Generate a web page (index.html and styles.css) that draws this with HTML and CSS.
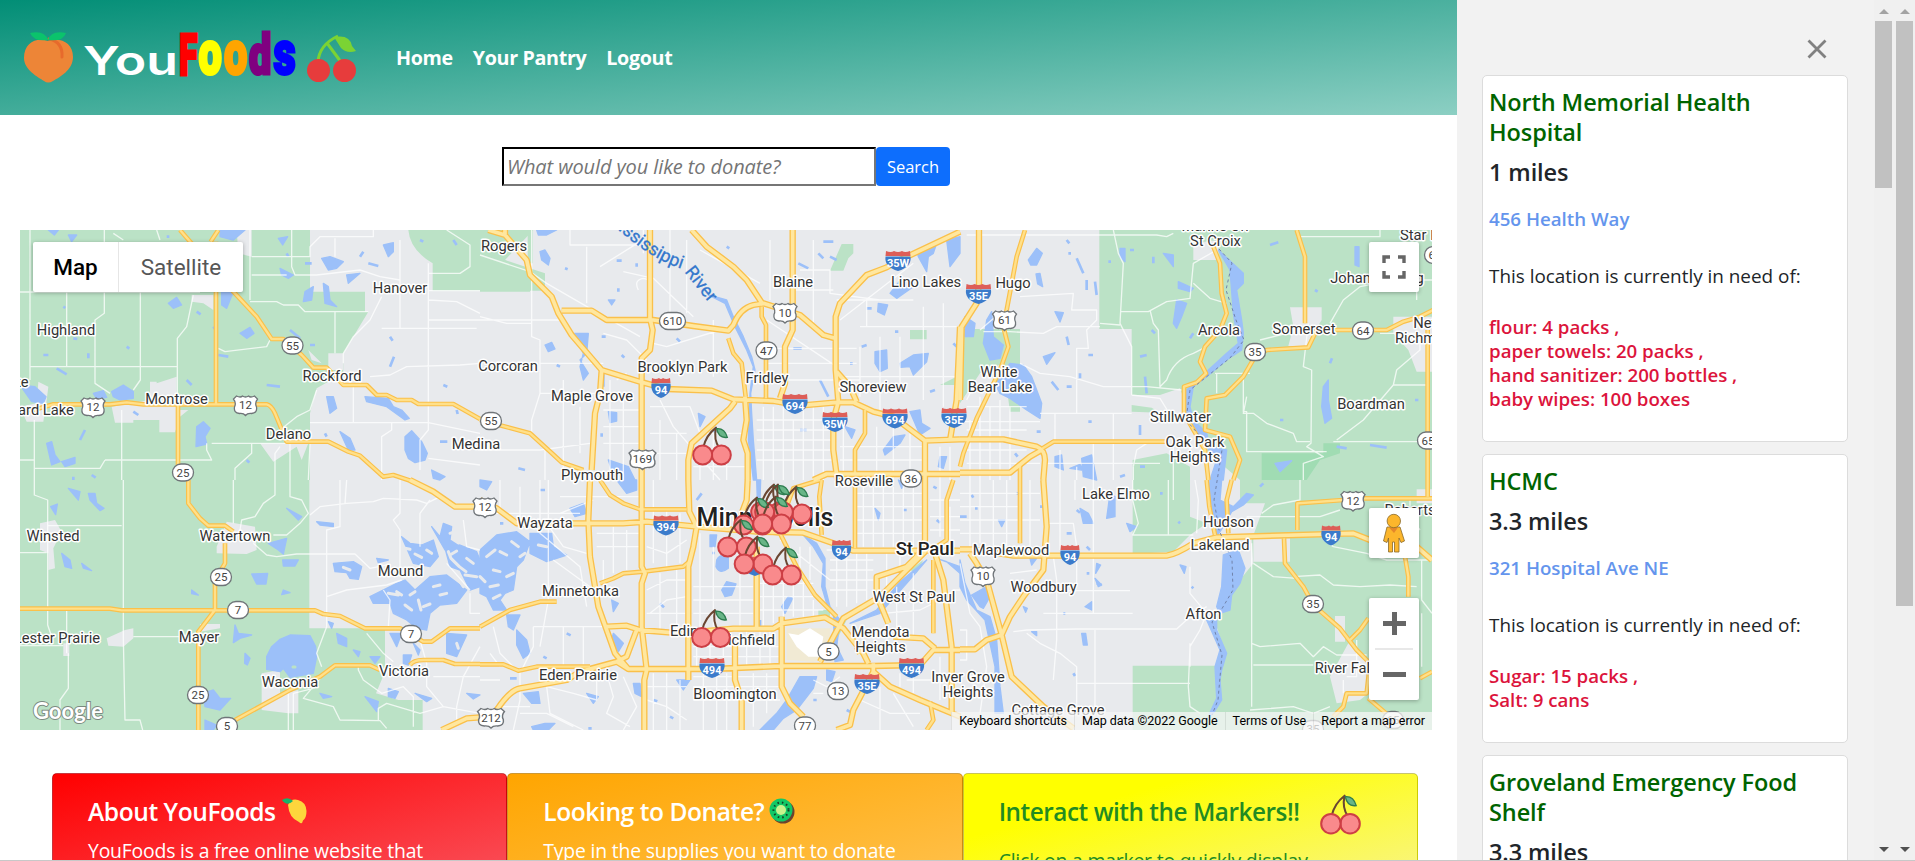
FILE: index.html
```html
<!DOCTYPE html>
<html lang="en">
<head>
<meta charset="utf-8">
<title>YouFoods</title>
<link rel="stylesheet" href="styles.css">
</head>
<body>
<div class="app">
<div class="page">
  <header class="navbar">
    <svg class="logo" width="340" height="60" viewBox="20 28 340 60">
      <path d="M48 41C37 37 24 42 24 58C24 70 38 77 44 81Q48 84 53 81C60 77 73 70 73 57C73 42 60 37 48 41Z" fill="#ed8537"/>
      <path d="M49 39Q63 42 62 57" fill="none" stroke="#e76a2c" stroke-width="3" stroke-linecap="round"/>
      <path d="M48 40Q34 42 30 33Q45 30 48 40ZM48 40Q51 30 66 33Q63 42 48 40Z" fill="#0bc36c"/>
      <g class="logo-you"><text x="83" y="75" textLength="95" lengthAdjust="spacingAndGlyphs">You</text></g>
      <g class="logo-foods">
        <text transform="translate(179 74.500) scale(.58 1)" fill="#f00" stroke="#f00" font-size="58">F</text>
        <text transform="translate(198.500 73.500) scale(.67 1)" fill="#ff0" stroke="#ff0" font-size="62">o</text>
        <text transform="translate(224 73.500) scale(.67 1)" fill="#ffa500" stroke="#ffa500" font-size="62">o</text>
        <text transform="translate(249 74) scale(.72 1)" fill="#800080" stroke="#800080" font-size="55">d</text>
        <text transform="translate(273.500 73.500) scale(.7 1)" fill="#00f" stroke="#00f" font-size="62">s</text>
      </g>
      <path d="M318 62Q319 45 338 36M327 43L341 62" fill="none" stroke="#7bd334" stroke-width="3"/>
      <path d="M334 37Q350 34 352 46L356 51Q347 54 341 48Z" fill="#7bd334"/>
      <ellipse cx="318.500" cy="70.500" rx="11.500" ry="11.500" fill="#e73c3c"/>
      <ellipse cx="344.500" cy="70.500" rx="11.500" ry="11.500" fill="#e73c3c"/>
    </svg>
    <nav class="links"><a>Home</a><a>Your Pantry</a><a>Logout</a></nav>
  </header>

  <form class="search">
    <input type="text" placeholder="What would you like to donate?">
    <button type="button">Search</button>
  </form>

  <section class="map">
    <svg class="map-canvas" width="1412" height="500" viewBox="20 230 1412 500">
      <defs>
        <g id="cherry">
          <path d="M72 5Q42 28 34 64M72 5Q64 40 82 66" fill="none" stroke="#6a4632" stroke-width="6" stroke-linecap="round"/>
          <path d="M74 8Q98 6 106 34Q80 38 74 8Z" fill="#68b587" stroke="#2e7d50" stroke-width="4"/>
          <circle cx="88" cy="87" r="28.500" fill="#f98a8c" stroke="#cd3f45" stroke-width="6"/>
          <circle cx="32" cy="87" r="28.500" fill="#f98a8c" stroke="#cd3f45" stroke-width="6"/>
        </g>
        <rect id="st" x="-10.500" y="-8.500" width="21" height="17" rx="8.500" fill="#fff" stroke="#6f7478" stroke-width="1.300"/>
        <rect id="st3" x="-13" y="-8.500" width="26" height="17" rx="8.500" fill="#fff" stroke="#6f7478" stroke-width="1.300"/>
        <path id="us" d="M-9-9Q-5-7-3-9Q0-7 3-9Q5-7 9-9L12-6Q9-2 11 2Q12 8 6 8.500Q2 8 0 10.500Q-2 8-6 8.500Q-12 8-11 2Q-9-2-12-6Z" fill="#fff" stroke="#6f7478" stroke-width="1.300"/>
        <g id="is"><path d="M-9.500-4.500H9.500Q11 6 0 10Q-11 6-9.500-4.500Z" fill="#3b7bcb"/><path d="M-9-10Q-5-8-2-10Q0-8 2-10Q5-8 9-10L9.500-5H-9.500Z" fill="#dd5e58"/></g>
        <g id="is3"><path d="M-12.500-4.500H12.500Q14 6 0 10Q-14 6-12.500-4.500Z" fill="#3b7bcb"/><path d="M-12-10Q-7-8-4-10Q0-8 4-10Q7-8 12-10L12.500-5H-12.500Z" fill="#dd5e58"/></g>
        <g id="major">
          <path transform="translate(480 220) scale(.33333)" d="M25 30L75 45 140 120 150 165 215 230 235 280 275 345 365 450 480 485 560 507 695 512 760 538 880 543 960 557 1070 547H1120L1180 575 1240 590 1335 662 1440 658M75 30V45M510 30V295L518 330 510 390 485 415V780M245 272H335L380 300H520L640 318 745 332 760 315Q780 265 820 255L850 250 960 285 1030 345 1065 355M635 30L680 80 760 140 800 180 850 255M938 30V330L915 380V490L900 535M1440 35L1260 120 1220 142 1160 165 1080 250 1067 290V450L1075 545 1060 600V690L1072 780M1070 455L1110 500 1130 545M365 450L360 520 345 580 335 750M765 545L750 565 690 620 635 670 625 720V780M795 530L800 600 790 660 803 700V780M1440 320L1430 540 1410 660M1335 662V780M1000 780L1040 762H1440"/>
          <path transform="translate(960 220) scale(.33333)" d="M57 30V190L50 250 5 320 0 540M0 658H130L230 680Q255 690 255 720L250 780M0 758H150L210 710 245 690"/>
          <path transform="translate(0 480) scale(.33333)" d="M1230 0L1300 35 1365 80H1440M1325 750L1400 715 1440 712"/>
          <path transform="translate(480 480) scale(.33333)" d="M330 0L325 120 330 230 355 380 405 520 445 567M485 0V260L495 280 485 310V440L500 570 493 600V750M0 60L50 85 110 130H430L500 125 650 140 830 155 970 158 1060 190 1120 212H1440M625 0L628 95 650 140 640 200 625 260V600M803 0L800 60 770 140M380 440L440 437 480 450 600 460 760 446H880L905 430 1035 412 1090 445 1150 520 1165 550M470 450L440 530 410 545M50 690Q90 630 120 625L260 600 300 575 410 545 445 567H700L900 558H1180L1320 555 1360 510H1440M765 490V600L785 660V750M905 410V620L930 670 970 710M830 200V445M1335 0V180L1310 230 1280 260 1190 290V345L1225 430M1020 545L1050 490 1090 415 1200 350 1290 260 1335 215M1365 220L1390 300 1415 500V700M1240 470L1330 475 1365 505M1180 550V575L1230 620 1320 660 1440 710M1070 750L1110 735 1120 690 1180 575M1140 520L1130 500"/>
          <path transform="translate(960 480) scale(.33333)" d="M0 208H40L160 227H620Q650 222 700 190L770 172 1180 160 1230 180 1370 200 1416 240M250 0L260 140 250 270 190 350 150 410 125 465 80 480 45 508H0M30 220L50 250 80 300 125 465 155 590 250 680 340 745"/>
        </g>
        <g id="minor">
          <path transform="translate(0 220) scale(.33333)" d="M540 30L700 215 770 290 815 357H850L905 405 940 443H980L1030 495H1100L1130 525H1160L1190 540H1235L1255 552H1360L1440 597M655 30L632 65M648 65V553M60 570H100L160 553H330L380 547 430 553H800Q815 557 825 580L860 665H985L1045 695 1080 707 1150 770 1180 765 1240 785M534 553V740L565 780"/>
          <path transform="translate(480 220) scale(.33333)" d="M0 600L65 617 150 640 205 690 245 727 310 750M845 260V290L858 315V535M745 355L760 400 785 430 797 530M1155 570V640L1125 690V760"/>
          <path transform="translate(960 220) scale(.33333)" d="M195 30L170 110 140 270 130 320 145 380 120 450 50 595 10 700 0 740M240 690L280 665H620M180 730V780M760 80L780 130 785 220 800 280 780 330 735 380 720 425 738 460 710 487 672 500V580L735 690 745 780M1010 30L1035 110V310M1430 265L1380 290 1330 305 1280 330H1070L1045 382 920 390 885 410 850 470 795 525 740 535 735 630 810 650 840 720 820 780M1403 330V780"/>
          <path transform="translate(0 480) scale(.33333)" d="M565 0V70L600 115 625 137H675L700 155M675 190V250L645 300V390L595 455V750M60 386H330L365 391H945L970 402 1020 408 1095 445H1200L1270 485H1295L1350 445H1440M680 735L715 715 870 630 960 590 1005 556H1110L1140 570M1230 555Q1240 540 1270 540H1330L1365 552H1440"/>
          <path transform="translate(480 480) scale(.33333)" d="M360 0L390 45 430 70 480 88H620M0 440L90 390 180 365H230M360 310L400 295 430 280 490 275 610 260 628 245M0 553H70L115 572 170 560H330M850 155L900 160 950 260 1005 345 1070 410M1025 0L1018 50 1025 165M1125 0V205M1360 240V460M1350 665L1360 720 1340 750M1420 0L1400 60V180L1370 200M920 80L940 25 1020 0"/>
          <path transform="translate(960 480) scale(.33333)" d="M180 0V190M740 0L748 80 765 165M815 0L800 60 805 160M1012 150V70L1150 60 1200 55H1416M1403 0V50M972 175L975 250 1030 320 1060 375 1140 445 1190 510 1230 550 1220 640H1160L1150 680 1120 710M1170 480L1200 450 1225 415M1335 230L1345 290V350M1225 655L1290 710M1380 595L1416 575"/>
        </g>
      </defs>

      <rect x="20" y="230" width="1412" height="500" fill="#e8eaed"/>

      <!-- parks and farmland -->
      <g fill="#bbe2c6">
        <path transform="translate(0 220) scale(.33333)" d="M60 30H930V215H1095V275H1105L1030 400V460L950 505 930 580V780H60ZM1225 30H1600L1515 120 1635 160V212H1298V130Q1230 90 1225 30Z"/>
        <path transform="translate(480 220) scale(.33333)" d="M0 105L75 120 150 160V215H0ZM143 30H158V130H143ZM1085 72h35v28l-15 15-15 37h-40zM1290 330h50v28h-50zM1380 495l60-30v30z"/>
        <path transform="translate(960 220) scale(.33333)" d="M418 30H1416V780H840L735 690 680 560 660 505 600 525H515V327H418ZM515 555l60 8 25 15-85-3zM518 720L620 700 690 740V780H518ZM0 327H180V575H150L130 430 60 460 0 550Z"/>
        <path transform="translate(0 480) scale(.33333)" d="M60 0H928V445H1155V575L1128 640 1195 660H1268V750H60Z"/>
        <path transform="translate(480 480) scale(.33333)" d="M1015 390h35v20h-35zM1060 430l40-10-30 60zM1290 270l40-30-20 40z"/>
        <path transform="translate(960 480) scale(.33333)" d="M518 0H690V110L740 130 690 165 640 215 518 222ZM840 0H1416V750H518V557H765L790 500 760 410 840 300 880 250 875 180 915 70 840 70Z"/>
      </g>
      <path transform="translate(960 220) scale(.33333)" fill="#a0dcb3" d="M905 700H1090V670H1140V700L1080 720 1040 780H905Z"/>
      <g fill="#e8eaed">
        <path transform="translate(0 220) scale(.33333)" d="M470 490L530 470V570H565L540 590 525 637H478V600H400V608H345L335 560 450 540 450 485H470ZM710 30H755V110L715 100ZM575 225H640V270L610 250 575 245ZM115 485L145 500 140 540 130 605H80L60 560 110 550ZM780 670H925L905 720 890 680 820 725ZM985 400H1030V450H985ZM925 390l40 40-30-10z"/>
        <path transform="translate(0 480) scale(.33333)" d="M120 130L165 120 185 155 160 205 165 265 145 270 145 220 120 210ZM650 200L680 125 765 140 770 210 740 222 650 220ZM320 475L375 450 400 445V475L370 500 325 497ZM600 432H660V445L600 455ZM785 580L840 570V640L895 630V700H865L785 690ZM190 490h18v38h-18z"/>
        <path transform="translate(960 220) scale(.33333)" d="M700 70L775 60V120H700ZM990 262H1085V300L1060 340 1040 378H985L1000 320ZM1300 290H1416V455H1370L1345 390 1300 340Z"/>
        <path transform="translate(960 480) scale(.33333)" d="M880 175H990V245H880ZM1125 408H1155V485H1125ZM1110 590L1165 490 1225 540V640L1200 660 1130 670ZM1370 28H1416V70H1370Z"/>
      </g>
      <path transform="translate(480 480) scale(.33333)" fill="#f1ead4" d="M920 445H1050V530L1000 545 920 540Z"/>
      <path transform="translate(480 480) scale(.33333)" fill="#fff" d="M925 460L955 465 990 445 1030 470 1020 530 985 530 950 500Z"/>

      <!-- lakes and rivers -->
      <g fill="#9cc0f9" stroke="#9cc0f9" stroke-width="4" stroke-linejoin="round">
        <path transform="translate(0 220) scale(.33333)" d="M660 30H735L700 60 660 50ZM60 495L105 500 138 530 130 550 95 545ZM335 515L370 495 400 515 400 535 360 540 340 530ZM280 520l30-8 10 20-30 5zM590 620L610 605 630 625 615 650 620 672 588 680ZM140 670L155 665 165 705 180 725 155 735ZM185 725L225 712 225 730 195 740ZM965 115L990 110 1030 125 1010 145 985 150ZM980 530l20 0 10 35-20 15zM1095 530L1165 535 1180 560 1205 570 1228 595 1215 600 1160 560 1100 545ZM1020 635L1050 655 1065 690 1045 690ZM1215 650L1235 632 1265 665 1282 700 1275 720 1245 728 1225 715 1215 690ZM505 250L530 232 545 255 520 265ZM665 215L700 215 680 265 665 255ZM720 340L750 322 762 340 740 355ZM840 145L880 165 865 175 845 165ZM915 215L940 200 935 240 910 245ZM970 190L985 200 990 240 1010 260 975 250ZM1150 75L1180 68 1180 95 1165 110ZM1040 165l40-5-35 30zM1295 750L1335 770 1320 780 1300 775ZM835 55l28-5-15 25zM145 30h30l-12 15zM205 45l25 0-15 20z"/>
        <path transform="translate(480 220) scale(.33333)" d="M180 95l15-5 15 25-5 20-20-15zM280 340L325 340 320 400 300 420 325 460 310 480 300 440 310 400ZM195 375l20-8 10 20-20 8zM385 575l25 3 0 25-20 5zM385 720l60 20 20 40h-60zM1185 395L1220 390 1222 445 1200 455 1185 430ZM1260 430L1300 405 1345 400 1340 425 1300 465 1290 440 1262 442ZM1310 90L1370 70 1360 100 1345 110 1340 155 1315 110ZM1400 60L1440 50V100L1410 140ZM1230 220L1265 175 1300 200 1250 235ZM1195 250l28 5-10 30-20-10zM1210 690L1240 650 1275 645 1260 670 1215 705ZM1290 575L1320 570 1325 610 1350 625 1320 645ZM1095 620l30 10-10 25zM1380 710l20 0-10 35-15-5zM655 580l20 10-15 30zM385 240l20 0-10 15zM685 225L740 240 760 290 790 350 815 410 825 450 812 520 815 580 820 660 830 780H820L805 660 810 520 820 440 800 390 765 320 735 250ZM170 30H230L200 45 175 45Z"/>
        <path transform="translate(960 220) scale(.33333)" d="M205 120L230 85 247 100 230 135 212 135ZM228 162l12-2 8 40-15-8zM80 300L95 275 100 350 130 375 120 415 90 420 70 370ZM15 290L45 310 40 350 15 350ZM105 490L150 430 190 435 215 470 245 550 240 595 200 570 150 535 120 520ZM285 275l25 3-10 28zM250 410l35-12-25 35zM640 310L650 240 680 250 665 290 650 325ZM655 185L700 205 690 215 655 205ZM1090 500L1105 480 1105 540 1115 595 1095 610 1085 560ZM610 100l30 5 0 35zM480 85l15 0 0 40-15-15zM1185 80l12 0 0 60-12-5zM945 730L995 722 960 755ZM365 715L395 705 410 780 370 770ZM775 90L850 160 850 190 830 210 845 300 850 340 845 390 800 420 740 470 700 500 690 560 700 600 740 640 750 680 800 690 790 780 750 780 770 720 710 640 675 590 680 510 800 400 835 370 820 280 810 150ZM285 710L305 705 310 750 285 740ZM330 745l30-12 10 18z"/>
        <path transform="translate(0 480) scale(.33333)" d="M800 530L815 500 840 478 870 465 930 467 947 500 950 530 940 580 870 592 850 565 840 575 800 568ZM205 25L240 35 235 60ZM265 40L285 40 290 70 312 85 300 92 270 60ZM152 80l20-8-5 32zM185 220L210 240 215 265 195 260ZM245 250l30 22-25-8zM860 85L905 110 895 120ZM805 190L860 175 850 222 835 210ZM848 240L895 240 885 258 850 258ZM755 282L803 280 798 312 770 312ZM575 330l20 15-20-4zM850 330l20 8-25 6zM705 435L715 460 755 465 720 475 700 488ZM735 520l15 15-8 20-8-5zM610 640L640 630 660 655 692 655 660 690 615 680ZM615 720L650 735 640 750H615ZM950 125L1000 130 1000 140 960 135ZM1000 250L1060 245 1085 260 1075 298 1050 295 1040 278 1005 275ZM1130 235l35 5-30 8zM1205 170L1230 190 1265 195 1300 180 1315 230 1290 260 1240 250ZM1295 140L1320 170 1330 130 1355 140 1350 180 1380 200 1335 210ZM1335 205L1380 195 1430 215 1440 240V320L1410 330 1380 270 1350 260ZM1110 350L1190 310 1215 300 1245 330 1290 290 1340 285 1400 330 1370 370 1320 375 1290 400 1280 450 1250 445 1220 420 1180 400 1170 370 1120 370ZM1010 460L1040 475 1040 500 1015 490ZM1060 510l20 5-5 15zM1110 530l30 0-15 20zM1340 460L1400 465 1370 530 1340 520ZM1095 650L1135 665 1130 695ZM1165 625l30 10-10 20-20-5zM1245 640L1295 655 1280 665ZM1400 640l40 5-20 12zM960 640l35 10-25 5zM985 425l15 5-5 15zM1210 525l25 0-10 30-15-5zM1170 460l35 0-15 40zM1240 490l20 20-5 15z"/>
        <path transform="translate(480 480) scale(.33333)" d="M0 210L50 165 110 155 150 185 130 240 110 260 100 330 75 340 60 360 80 390 40 390 20 350 0 340ZM150 160L215 160 220 200 260 225 200 245 150 220ZM410 0H470V30L440 40ZM270 85L310 70 320 100 285 110ZM80 405L120 405 100 450 85 440ZM110 450L140 480 150 520 130 535 110 495ZM400 460L430 490 415 515 395 480ZM395 360l20 10-15 25zM130 640L175 635 180 670 155 670ZM320 640l35 10-15 20zM460 610l20 0 5 40-20-10zM710 240Q720 220 745 230L745 265Q720 285 708 260ZM725 330L740 305 768 312 755 345 735 350ZM690 165l20 0-5 35-15 0zM905 380L925 350 938 355 915 400ZM590 600L630 600 610 630ZM920 660L960 590 1010 590 1000 625 950 690 910 715 880 750H840L890 700ZM1040 570l25 5-10 30-15-5zM970 165L1010 190 1035 235 1035 320 1050 380 1080 420 1070 500 1090 540 1065 545 1060 400 1040 370 1025 320 1030 250 1000 200ZM1340 240L1280 310 1200 400 1110 430 1190 390 1260 305ZM1370 235L1440 260V280L1400 245ZM0 0L35 5 20 30 0 20ZM155 740l40-10 30 0-20 20h-45zM1185 85l15 15-5 20zM1255 0l20 10-10 15zM830 0h12l-2 60h-8z"/>
        <path transform="translate(960 480) scale(.33333)" d="M35 345L80 320 90 350 70 385 60 380ZM0 240L15 310 50 390 90 410 110 480 120 620 130 700 105 700 105 560 75 420 20 360 0 320ZM750 0H785L780 60 820 80 860 40 880 45 850 75 815 95 790 140 770 170 745 80ZM790 225L835 210 855 265 840 310 815 345 810 390 780 400 770 380 785 320ZM740 420L770 410 770 450 800 520 785 570 780 600 785 660 760 700 740 720 770 655 765 560 780 510ZM360 85L385 100 400 130 370 130ZM450 40L465 50 465 110 440 115ZM500 130l30 10-20 15zM115 120l20 0-10 20zM410 250l12 5-15 25zM660 255l18 5-5 20zM405 295l20 20-10 5zM375 380L395 365 395 390ZM365 460l12 0 5 35-12 0zM210 235l20 0-15 20zM215 455l15 0 0 12zM190 380l12 5-5 12z"/>
      </g>
      <!-- peninsulas and islands -->
      <g fill="none" stroke="#e8eaed" stroke-width="9" stroke-linecap="round" stroke-linejoin="round">
        <path transform="translate(0 480) scale(.33333)" d="M1245 222l20 10M1215 205l15 3M1350 225l20-12M1345 215l8 20 25 25 20 15M1400 235l20 15M1395 285l35 5M1190 335l15 10M1165 340l30 5M1230 345l15-10M1270 380l20-8M1255 360l8 30M1215 375l20 15M1300 320l20-5M1320 345l20-5M1370 490l5 15M1380 305l10 15M1350 160l15-5M1030 262l20 8M1280 210l15 10"/>
        <path transform="translate(480 480) scale(.33333)" d="M20 230l25-20M60 215l20 10M95 185l20 15M40 270l20 5M30 320l25-5M80 290l20-10M0 290l15 15M175 195l25 5M60 345l-20 10M120 230l15-10"/>
      </g>
      <path d="M293 667h2" stroke="#bbe2c6" stroke-width="3" stroke-linecap="round"/>
      <g fill="none" stroke="#9cc0f9" stroke-width="8">
        <path transform="translate(0 220) scale(.33333)" d="M220 355l12 2M130 405l15 0M170 445l30 18M265 400v15M560 480l15 15M400 575l15 10M240 660l15-30M590 275l12 8M655 405l30 5M800 495l40 5M930 375h15M1170 350l8 12M1170 440l12-30M1080 110l10-15M1330 495l12 5M1105 130l30 8M1260 60l10 5M1360 60l10 15M870 330l30 25M975 640l5 10M1320 665h22M220 770v10M275 765l12 8M500 50h8M915 130h20M860 100l5 10M1370 570l3 12M190 260l6 4M380 380l8 6M640 320l6 8M740 720l8 8"/>
        <path transform="translate(480 220) scale(.33333)" d="M410 122h15M470 130v10M415 205v10M365 350h12M255 145l8 3M115 745l20 5M365 640v10M230 435l10 5M425 405l8 8M590 355l10 10M1160 265h15M1160 375l-15 5M1245 335h10M1020 480l25 50M1110 430h8M1030 65h30M955 130l30 15M1015 100l15 15M470 715l15-10M960 630h20M1050 110l20 10M1350 515l15-5M1420 370l10 10M740 80l8 5M700 630l8 8M940 385h25M370 460v40"/>
        <path transform="translate(960 220) scale(.33333)" d="M325 100h8M350 115l20 45M380 180v30M405 185l5 40M320 350l6 25M385 405h14M275 485l20 25M360 460v15M575 330l10 10M540 410l20-5M555 470l5 50M700 340l-10 15M320 60l8 10M510 90h12M580 110v20M930 75l25-8M1110 430l6-15M960 600h10M1065 210l8 5M540 615v30M480 770l15-5M540 740h15M165 700l8 10M230 635h12M1130 680l30 5M1230 675l50 8M385 605h10M320 500h15M1365 540h10M445 125h8"/>
        <path transform="translate(480 480) scale(.33333)" d="M60 130h10M180 30h15M540 370l12 12M380 600h10M90 595h20M570 710l10 5M325 745h10M190 530l10 5M650 60l15-20M700 215v8M840 420v20M1370 120l10 8M1270 90h10M1000 660h10M1100 690l20 10M1360 20l10 5M520 660l12 4M260 460l12 6"/>
        <path transform="translate(960 480) scale(.33333)" d="M0 110h20M35 45l5 8M45 85h8M170 40h10M350 90l10 8M380 200l10 10M310 400h6M410 310l15 5M380 280h8M695 320l5 5M340 580l5 8M600 40h8M655 125l5 5M900 20l10-10M320 160h15M240 80h20"/>
      </g>

      <!-- local roads -->
      <g fill="none" stroke="#fff" stroke-width="4" stroke-opacity=".75" stroke-linejoin="round">
        <path transform="translate(0 220) scale(.33333)" d="M90 30V480M60 216H600M90 440H530M200 216V440M313 30V280L285 300V490L330 520M421 216V480L400 510M580 225L560 320 532 355V553M365 570V780M750 30V240M750 245H830L850 255H895L915 275H1105M755 110H930V80L960 50H1120V30M755 165H860M875 30V140L885 165H950L1080 150 1140 170 1200 180M1005 55V110M1005 275V400M1030 430V400L1060 350 1110 300 1145 230M950 510L930 570 890 590 840 630M1145 325H1430M1200 60V325M1285 130V240L1370 245 1440 280M1285 240V630L1260 660V750M1285 300H1440M1110 470L1170 465 1220 440 1380 435 1440 430M1060 500V608M930 608H1285L1440 640M1285 160H1380L1410 140V75L1340 30M1285 212H1440M655 385L675 395 800 380 810 360M755 670V700L705 745V780M870 670V780M930 670L925 780M635 670H860M315 720H635L620 690V670M60 720H103V780M103 745H300L315 720M103 600V780M1175 610V630L1145 650V780M1285 715L1440 735M470 30L480 60M840 680L825 700V780M370 60L340 40"/>
        <path transform="translate(480 220) scale(.33333)" d="M155 30V350L180 360V520L155 600V640M0 300H245M0 290L80 310H155M270 30V75H480M320 80V250M0 105L150 155 200 190 330 265 480 350M490 30V100M360 140L480 65M430 155L520 175 640 290M475 210Q460 180 490 175L510 180M570 30V300M620 60V280M660 90L840 190M700 300V470M720 330L560 380 520 370M860 300L1070 440M870 60V240M1000 60V330M1080 300L1300 130M1140 320H1440M1140 380V530M1070 240H1300M940 210H1060M960 150H1050V220L1200 240M1160 240V320M860 385H1130M860 430H1130M880 480H1140M1200 350V570M1260 350V520M1330 260V540M1390 250V560M1080 470H1440M370 340L440 360 500 420M180 430H370M180 520H360M250 480V780M300 560V700M195 690V780M0 690H180L330 670M390 480V780M430 520V780M370 570H490M370 620H490M370 670H490M410 480L440 460M510 560H630L660 640M540 540L580 620 720 780M660 640H800M540 600V780M590 640V780M510 640H620M510 700H620M660 700V780M700 640V780M740 700V780M640 740H800M850 560V780M880 560V780M910 560V780M940 600V780M970 560V780M1000 560V780M1030 560V780M830 600H1060M830 630H1060M830 660H1060M830 690H1060M830 720H1060M1090 600V780M1190 620V780M1240 620V780M1290 640V780M1080 680H1330M1080 720H1330M1380 680V780M1410 680V780"/>
        <path transform="translate(960 220) scale(.33333)" d="M20 45H590L620 50 640 40M460 30L475 100 490 130 480 310 515 380V525M480 275H565L620 245 690 235 700 130 770 90M700 190L750 235 800 250M570 270L580 310 595 330 600 500 620 480Q640 420 700 400L740 380M180 230L340 220 335 270H410V300L380 330 385 385H350V580M70 335H150L250 340 290 320H420M180 430L240 460 330 470 430 500H560L665 510M240 580H515M460 580V780M285 580V660M420 310L480 315M850 460V575H860V695H1100M860 530L850 580L880 580 920 610 1000 640 1010 665 1050 665M515 525L600 535 640 600M765 460H870M770 460V520M1045 310L1030 440 1055 450 1053 670 1040 680 1090 710 1030 730V780M1370 240V180L1250 190 1200 200 1150 240 1110 310M1010 50H1260V30M1370 180H1416M1260 340H1380V390L1310 450 1300 495 1210 600 1130 660M1300 495H1403M1120 665H1416M900 360L980 340M0 605H240M60 330L130 270M20 560H200M30 600V780M60 530V780M90 560V780M120 540V780M150 560V780M20 630H200M20 690H200M20 730H240M40 500L20 540M250 730H600M300 690V780M520 740L530 690 560 670M520 780V740M350 740V780M400 660V780M640 680V780M690 670V700"/>
        <path transform="translate(0 480) scale(.33333)" d="M103 0V45L143 60V435L155 470M143 137H365M60 218H140M370 0V475L375 720H420L428 750M200 390V520M205 520V625L180 660V750M60 497H190M400 470H560M700 0V130M825 0V45L790 70 765 110 725 120 720 150M870 0V50L905 60 925 100 900 130 860 165H820M760 190L800 225 830 230 890 222H1065L1110 265 1160 255M930 105L960 80 1040 70 1120 65 1150 55 1250 60 1280 70 1320 50M1020 0V140L980 150V350L1040 330 1160 315 1205 300M1200 0V100L1180 120 1200 150V280M1260 200V100L1290 60M1150 330L1170 360 1165 440M980 350V440L950 520 965 560M1100 460L1150 520 1180 545M1075 560V570L1090 600 1145 640 1210 620 1240 650V740M965 590L910 655 1000 680 1020 720 1140 722 1160 745M1135 720V685L1160 670 1260 700 1330 680 1440 700M1260 480L1280 550V620L1330 680M1370 720V680L1390 590 1440 500M1300 590H1440M1410 340V400H1440M1340 250L1410 330M865 640V750M880 750V640L940 625M1390 120L1400 200 1440 210M1040 0L1035 70"/>
        <path transform="translate(480 480) scale(.33333)" d="M0 100H300M60 0V90M120 20V110M180 0V160L300 260 320 380M205 0V360L180 500M220 240L330 320M160 440H370M160 440V500L120 580V660L100 750M120 580L60 520 40 440M250 440V560M310 440V560M200 130L250 200 320 220M240 50H480M350 160H480M350 200H480M370 240V300M400 140V280M440 150V270M520 0V250M560 90V260M600 100V250M500 200L560 220 620 180M500 330L560 300 620 300M510 400L560 360 620 350M540 280V450M590 270V450M500 400H620M660 160V440M700 200V440M780 260V440M640 360H820M640 320H820M640 400H820M850 260V440M880 260V430M910 260V410M940 280V410M970 300V410M1000 360V410M840 280H960M840 310H1000M840 350H1010M840 390H1030M900 180L1050 300M960 200V270M990 200V300M1040 210H1180M1050 240H1180M1050 270H1180M1050 300H1180M1050 330H1160M1070 220V380M1100 220V380M1130 220V370M1160 220V360M1150 20V200M1180 20V200M1210 0V200M1240 20V200M1270 0V200M1300 0V200M1130 40H1330M1130 80H1330M1130 120H1330M1130 160H1330M1220 220V330M1260 230V270M1380 0V170M1410 80V210M1350 60H1440M1350 110H1440M1350 150H1440M1210 400L1320 390 1400 350M1250 320V460M1300 280V470M1420 330H1440M650 470V560M690 470V560M730 470V560M800 450V560M840 450V560M870 450V560M640 500H900M640 530H900M640 590H900M640 620H900M640 660H900M670 580V750M710 580V750M740 580V750M820 580V740M860 580V700M520 580V750M560 580V750M600 600V750M500 620H620M500 660L560 680 620 720M430 590L470 680 430 750M350 600V660L280 640 200 620 210 700 310 750M380 580L400 650 380 700 450 740M0 600H60M120 700L200 700 280 740M60 680H150M30 520L60 560M1200 620V750M1240 640L1300 740M1140 660L1230 700 1320 700M1260 580V620M1300 570V640M1380 530V660M1280 600H1440M1000 600L1040 620 1080 590M1000 640H1030M340 60L240 100"/>
        <path transform="translate(960 480) scale(.33333)" d="M0 40H240M0 80H180M0 120H240M0 160H180M30 0V200M60 0V190M100 0V200M140 0V200M210 0V220M260 130H340L350 200V320M300 0V210M345 0V60M400 0V400H250M0 250L30 400 60 440 80 560 60 700M160 455L200 450 350 447H650L690 410 740 380M200 460L240 490 300 520 350 560V700M290 390V480L280 600M290 400V300L280 230M240 332H510M150 280L230 270M400 400H518M518 0V60L535 130 518 165H700M625 0V165M405 450V700M350 610H690M690 260V340L740 400 720 450 690 500 685 620 690 680 720 700M705 0L715 60 710 160M0 450H20V540H0M875 190V680M880 555H1060M875 490L900 500 1020 490 1060 530 1090 500 1130 525H1220M880 250L940 290 1010 295M1000 290L1080 285 1120 315 1200 320 1290 315 1370 320M860 110H1080L1140 90M905 100L940 75 1020 60V0M1090 180L1120 200 1220 220 1280 240H1416M1385 240V360L1416 400M1385 400V560M870 690L1000 680 1060 700 1110 680M1150 600V640M1190 480V590L1160 590M690 490V560M1350 60V110L1380 150M640 0V60"/>
      </g>

      <g fill="none" stroke-linejoin="round">
        <use href="#minor" stroke="#fac04a" stroke-width="14"/>
        <use href="#major" stroke="#fac04a" stroke-width="19"/>
        <use href="#minor" stroke="#ffe08a" stroke-width="7"/>
        <use href="#major" stroke="#ffe79f" stroke-width="11"/>
      </g>
      <path d="M1219 249L1232 263 1226 290 1236 320 1244 340 1230 358 1190 390 1186 420 1200 436 1222 450 1214 500 1219 530 1232 560 1233 590 1220 612 1212 622 1222 655 1218 700 1212 715" fill="none" stroke="#7183ab" stroke-width="1" stroke-dasharray="3 3"/>

      <g class="shield">
        <g transform="translate(292.500 345.500)"><use href="#st"/><text>55</text></g><g transform="translate(183 472.500)"><use href="#st"/><text>25</text></g>
        <g transform="translate(672.500 321)"><use href="#st3"/><text>610</text></g><g transform="translate(766.500 350.500)"><use href="#st"/><text>47</text></g>
        <g transform="translate(491 421)"><use href="#st"/><text>55</text></g><g transform="translate(911 478.500)"><use href="#st"/><text>36</text></g>
        <g transform="translate(1255 352)"><use href="#st"/><text>35</text></g><g transform="translate(1363 330.500)"><use href="#st"/><text>64</text></g>
        <g transform="translate(1428 440.500)"><use href="#st"/><text>65</text></g><g transform="translate(1435 255)"><use href="#st"/><text>65</text></g>
        <g transform="translate(221 577)"><use href="#st"/><text>25</text></g><g transform="translate(238 610)"><use href="#st"/><text>7</text></g>
        <g transform="translate(411 634)"><use href="#st"/><text>7</text></g><g transform="translate(198 695)"><use href="#st"/><text>25</text></g>
        <g transform="translate(227 726)"><use href="#st"/><text>5</text></g><g transform="translate(828.500 651.500)"><use href="#st"/><text>5</text></g>
        <g transform="translate(838 691)"><use href="#st"/><text>13</text></g><g transform="translate(805 725.500)"><use href="#st"/><text>77</text></g>
        <g transform="translate(1313 604)"><use href="#st"/><text>35</text></g><g transform="translate(1393 720)"><use href="#st"/><text>65</text></g>
        <g transform="translate(1313 729)"><use href="#st"/><text>35</text></g>
        <g transform="translate(93 407)"><use href="#us"/><text>12</text></g><g transform="translate(245.500 405)"><use href="#us"/><text>12</text></g>
        <g transform="translate(785 312.500)"><use href="#us"/><text>10</text></g><g transform="translate(642.500 459)"><use href="#us" transform="scale(1.120 1)"/><text>169</text></g>
        <g transform="translate(1004.500 320)"><use href="#us"/><text>61</text></g><g transform="translate(485 507)"><use href="#us"/><text>12</text></g>
        <g transform="translate(491 717.500)"><use href="#us" transform="scale(1.120 1)"/><text>212</text></g><g transform="translate(1353 500.500)"><use href="#us"/><text>12</text></g>
        <g transform="translate(983 576)"><use href="#us"/><text>10</text></g>
      </g>
      <g class="interstate">
        <g transform="translate(661 388)"><use href="#is"/><text>94</text></g><g transform="translate(795 404)"><use href="#is3"/><text>694</text></g>
        <g transform="translate(898 261)"><use href="#is3"/><text>35W</text></g><g transform="translate(835 422)"><use href="#is3"/><text>35W</text></g>
        <g transform="translate(895 418.500)"><use href="#is3"/><text>694</text></g><g transform="translate(954 418)"><use href="#is3"/><text>35E</text></g>
        <g transform="translate(978.500 294)"><use href="#is3"/><text>35E</text></g><g transform="translate(666 525.500)"><use href="#is3"/><text>394</text></g>
        <g transform="translate(841.500 550)"><use href="#is"/><text>94</text></g><g transform="translate(712 668)"><use href="#is3"/><text>494</text></g>
        <g transform="translate(911.500 668)"><use href="#is3"/><text>494</text></g><g transform="translate(867 684)"><use href="#is3"/><text>35E</text></g>
        <g transform="translate(1070 555)"><use href="#is"/><text>94</text></g><g transform="translate(1331 535.500)"><use href="#is"/><text>94</text></g>
        <g transform="translate(755 566)"><use href="#is3"/></g>
      </g>

      <path id="river" d="M568 188L628 238Q655 260 682 269L709 303" fill="none"/>
      <text class="river"><textPath href="#river" startOffset="100%" text-anchor="end">Mississippi River</textPath></text>

      <g class="place">
        <text x="400" y="293">Hanover</text><text x="66" y="335">Highland</text><text x="332" y="381">Rockford</text><text x="176.500" y="404">Montrose</text>
        <text x="31" y="415">Howard Lake</text><text x="13" y="387">Lake</text><text x="288.500" y="439">Delano</text>
        <text x="504" y="251">Rogers</text><text x="793" y="286.500">Blaine</text><text x="926" y="287">Lino Lakes</text><text x="508" y="371">Corcoran</text>
        <text x="682.500" y="372">Brooklyn Park</text><text x="767" y="383">Fridley</text><text x="592" y="400.500">Maple Grove</text><text x="873" y="391.500">Shoreview</text>
        <text x="476" y="448.500">Medina</text><text x="592" y="480">Plymouth</text><text x="864" y="486">Roseville</text>
        <text x="1215" y="231">Marine On</text><text x="1215.500" y="245.500">St Croix</text><text x="1013" y="288">Hugo</text><text x="1219" y="335">Arcola</text><text x="1304" y="333.500">Somerset</text>
        <text x="1436" y="240">Star Prairie</text><text x="1377" y="282.500">Johannesburg</text><text x="1428" y="328">New</text><text x="1428" y="343">Richmond</text>
        <text x="999" y="377">White</text><text x="1000" y="392">Bear Lake</text><text x="1180.500" y="422">Stillwater</text><text x="1195" y="446.500">Oak Park</text><text x="1195" y="461.500">Heights</text><text x="1371" y="409">Boardman</text>
        <text x="53" y="540.500">Winsted</text><text x="235" y="541">Watertown</text><text x="400.500" y="576">Mound</text><text x="57" y="642.500">Lester Prairie</text><text x="199" y="642">Mayer</text><text x="290" y="686.500">Waconia</text><text x="404" y="676">Victoria</text>
        <text x="545" y="528">Wayzata</text><text x="580.500" y="596">Minnetonka</text><text x="914" y="602">West St Paul</text><text x="688" y="636">Edina</text><text x="747" y="644.500">Richfield</text><text x="880.500" y="636.500">Mendota</text><text x="880.500" y="651.500">Heights</text>
        <text x="578" y="680">Eden Prairie</text><text x="735" y="698.500">Bloomington</text><text x="968" y="681.500">Inver Grove</text><text x="968" y="696.500">Heights</text>
        <text x="1116" y="499">Lake Elmo</text><text x="1228.500" y="526.500">Hudson</text><text x="1220" y="549.500">Lakeland</text><text x="1011" y="554.500">Maplewood</text><text x="1043.500" y="592">Woodbury</text><text x="1203.500" y="619">Afton</text>
        <text x="1348" y="672.500">River Falls</text><text x="1410" y="515">Roberts</text><text x="1058" y="715">Cottage Grove</text>
        <text x="925" y="555" class="city">St Paul</text><text x="765" y="525.500" class="metro">Minneapolis</text>
      </g>

      <g>
        <use href="#cherry" transform="translate(692 426) scale(.33333)"/><use href="#cherry" transform="translate(750 483) scale(.33333)"/>
        <use href="#cherry" transform="translate(772.500 485) scale(.33333)"/><use href="#cherry" transform="translate(754 483) scale(.33333)"/>
        <use href="#cherry" transform="translate(733 496) scale(.33333)"/><use href="#cherry" transform="translate(752 495) scale(.33333)"/>
        <use href="#cherry" transform="translate(717 518) scale(.33333)"/><use href="#cherry" transform="translate(733.500 535) scale(.33333)"/>
        <use href="#cherry" transform="translate(762 546) scale(.33333)"/><use href="#cherry" transform="translate(691 608.500) scale(.33333)"/>
      </g>
      <text class="google" x="33" y="719" textLength="70" lengthAdjust="spacingAndGlyphs">Google</text>
    </svg>

    <div class="map-ui">
      <div class="maptype"><span class="on">Map</span><span>Satellite</span></div>
      <div class="tools">
        <div class="tool"><svg width="24" height="24" viewBox="0 0 24 24"><path d="M2 8V2H8M16 2H22V8M22 16V22H16M8 22H2V16" fill="none" stroke="#666" stroke-width="3.400"/></svg></div>
        <div class="tool pegman"><svg width="24" height="40" viewBox="0 0 24 40"><path d="M5 14H18L22.500 28 19 29.500 17 25V39H12.500V29H10.500V39H6.500V25L5 29.500 1.500 28Z" fill="#fcb62c" stroke="#8a6a28" stroke-width=".8"/><path d="M7 14.500H16L12 20Z" fill="#e5872a"/><circle cx="11.800" cy="8" r="6.700" fill="#fcb62c" stroke="#8a6a28" stroke-width=".8"/></svg></div>
        <div class="zoom"><svg width="50" height="102" viewBox="0 0 50 102"><path d="M14 25.500H37M25.500 14V37M14 76.500H37" stroke="#666" stroke-width="5"/><path d="M6 51H44" stroke="#e0e0e0" stroke-width="1.500"/></svg></div>
      </div>
      <div class="legal"><span>Keyboard shortcuts</span><span>Map data ©2022 Google</span><span>Terms of Use</span><span>Report a map error</span></div>
    </div>
  </section>

  <section class="cards">
    <article class="card red">
      <h2>About YouFoods <svg width="28" height="28" viewBox="0 0 28 28"><path d="M7 8Q10 1 17 3Q25 5 25.500 14Q25.500 21 22 23.500Q21 28 18 25Q8 21 7 8Z" fill="#fdd63c"/><path d="M1 3Q7-1 12 4Q6 10 1 3Z" fill="#16b56a"/></svg></h2>
      <p>YouFoods is a free online website that</p>
    </article>
    <article class="card orange">
      <h2>Looking to Donate? <svg width="26" height="26" viewBox="0 0 26 26"><circle cx="14" cy="14" r="11.500" fill="#6b4330"/><circle cx="12" cy="12" r="11.500" fill="#12c866"/><circle cx="12" cy="12" r="7.500" fill="none" stroke="#153f24" stroke-width="2" stroke-dasharray="1.500 3"/><circle cx="12" cy="12" r="5" fill="#c6f28d"/></svg></h2>
      <p>Type in the supplies you want to donate</p>
    </article>
    <article class="card yellow">
      <h2>Interact with the Markers!! <svg width="41" height="41" viewBox="0 0 120 120"><use href="#cherry"/></svg></h2>
      <p>Click on a marker to quickly display</p>
    </article>
  </section>
</div>

<aside class="sidebar">
  <div class="close"><svg width="20" height="20" viewBox="0 0 20 20"><path d="M1.500 1.500L18.500 18.500M18.500 1.500L1.500 18.500" stroke="#818181" stroke-width="2.800"/></svg></div>
  <article class="place-card">
    <h3 class="name">North Memorial Health Hospital</h3>
    <h3>1 miles</h3>
    <h4>456 Health Way</h4>
    <p>This location is currently in need of:</p>
    <ul><li>flour: 4 packs ,</li><li>paper towels: 20 packs ,</li><li>hand sanitizer: 200 bottles ,</li><li>baby wipes: 100 boxes</li></ul>
  </article>
  <article class="place-card">
    <h3 class="name">HCMC</h3>
    <h3>3.3 miles</h3>
    <h4>321 Hospital Ave NE</h4>
    <p>This location is currently in need of:</p>
    <ul><li>Sugar: 15 packs ,</li><li>Salt: 9 cans</li></ul>
  </article>
  <article class="place-card">
    <h3 class="name">Groveland Emergency Food Shelf</h3>
    <h3>3.3 miles</h3>
  </article>
</aside>
<div class="scrollbar"><i class="up"></i><b class="thumb short"></b><i class="down"></i></div>
<div class="scrollbar"><i class="up"></i><b class="thumb long"></b><i class="down"></i></div>
</div>
</body>
</html>
```

FILE: styles.css
```css
* { box-sizing: border-box; }
body { margin: 0; font-family: "Open Sans", "Noto Sans", sans-serif; color: #212529; }
h2, h3, h4, p, ul { margin: 0; padding: 0; list-style: none; }
.app { display: flex; width: 1915px; height: 861px; overflow: hidden; background: #fff; border-bottom: 1px solid #c8c8c8; }
.page { width: 1457px; flex: none; overflow: hidden; }

.navbar { height: 115px; display: flex; align-items: center; padding-left: 20px; background: linear-gradient(175deg, #028e76, #8ccfc3); }
.logo { display: block; overflow: visible; }
.logo-you { font: 600 40px Inter, sans-serif; fill: #fff; }
.logo-foods { font-family: Roboto, sans-serif; font-weight: 900; stroke-width: 3; }
.links { display: flex; gap: 20px; margin-left: 36px; font-size: 19.700px; font-weight: 700; letter-spacing: -.35px; color: #fff; }

.search { display: flex; margin: 32px 0 0 502px; height: 39px; }
.search input { width: 374px; height: 39px; border: 2px inset #767676; border-color: #222 #767676 #767676 #222; padding: 0 3px; font: italic 20px "Open Sans", sans-serif; letter-spacing: -.1px; background: #fff; outline: 0; }
.search input::placeholder { color: #757575; }
.search button { width: 74px; padding: 0; border: 0; border-radius: 4px; background: #0d6efd; color: #fff; font: 16.500px "Open Sans", sans-serif; }

.map { position: relative; width: 1412px; height: 500px; margin: 44px 0 0 20px; overflow: hidden; }
.map-canvas { display: block; }
.place text { font: 14.700px Roboto, sans-serif; fill: #333; text-anchor: middle; stroke: #fff; stroke-width: 3px; stroke-linejoin: round; paint-order: stroke; }
.place .city { font-size: 18.500px; font-weight: 500; fill: #222; }
.place .metro { font-size: 25px; font-weight: 500; fill: #222; }
.shield text { font: 11.500px Roboto, sans-serif; fill: #444; text-anchor: middle; transform: translateY(4px); }
.interstate text { font: 700 11px Roboto, sans-serif; fill: #fff; text-anchor: middle; transform: translateY(5.500px); }
.river { font: 18px Roboto, sans-serif; fill: #3377cc; stroke: #3377cc; stroke-width: .3px; }
.google { font: 700 23px Lato, sans-serif; fill: #fff; stroke: #7b8a80; stroke-width: 2px; paint-order: stroke; }
.map-ui { position: absolute; inset: 0; }
.maptype { position: absolute; left: 13px; top: 12px; display: flex; height: 50px; background: #fff; border-radius: 2px; box-shadow: 0 1px 4px rgba(0,0,0,.3); font: 22.500px/50px Roboto, sans-serif; color: #565656; text-align: center; }
.maptype span { width: 124px; }
.maptype .on { width: 86px; font-weight: 500; color: #000; border-right: 1px solid #e6e6e6; }
.tools { position: absolute; right: 13px; top: 12px; width: 50px; display: flex; flex-direction: column; }
.tool, .zoom { background: #fff; border-radius: 2px; box-shadow: 0 1px 4px rgba(0,0,0,.3); }
.tool { height: 50px; display: flex; align-items: center; justify-content: center; }
.pegman { margin: 216px 0 40px; }
.zoom { height: 102px; }
.zoom svg { display: block; }
.legal { position: absolute; right: 0; bottom: 0; height: 18px; display: flex; background: rgba(245,245,245,.75); font: 12.500px/18px Roboto, sans-serif; color: #000; letter-spacing: -.03px; }
.legal span { padding: 0 7px; white-space: nowrap; border-left: 1px solid rgba(0,0,0,.08); }

.cards { display: flex; margin: 43px 0 0 52px; width: 1366px; height: 200px; }
.card { flex: 1; padding: 21px 0 0 35px; border: 1px solid rgba(0,0,0,.2); border-radius: 5px; color: #fff; white-space: nowrap; }
.card h2 { height: 32px; display: flex; align-items: center; gap: 5px; font-size: 24.600px; font-weight: 600; letter-spacing: -.45px; }
.card p { margin-top: 9px; font-size: 19.400px; line-height: 30px; letter-spacing: -.2px; }
.red { background: linear-gradient(165deg, #f00, #f85f6b 85%); }
.orange { background: linear-gradient(165deg, orange, #ffc65a 85%); }
.yellow { background: linear-gradient(165deg, #ff0 20%, #f8f48c 75%); color: #228b22; }
.yellow h2 { gap: 21px; font-size: 24.300px; }
.yellow h2 svg { margin-top: 6px; }
.yellow p { margin-top: 19px; }

.sidebar { width: 417px; flex: none; overflow: hidden; background: #f2f2f2; padding-left: 25px; }
.close { height: 75px; padding: 39px 0 0 325px; }
.close svg { display: block; margin-left: -.5px; }
.place-card { width: 366px; margin-bottom: 12px; padding: 11px 0 30px 6px; background: #fff; border: 1px solid #dcdcdc; border-radius: 5px; }
.place-card h3 { font-size: 23.500px; line-height: 30px; font-weight: 600; margin-bottom: 10px; letter-spacing: -.1px; }
.place-card .name { color: #006400; padding-right: 20px; }
.place-card h4 { margin-top: 20px; font-size: 18.700px; line-height: 24px; font-weight: 600; color: #6495ed; }
.place-card p { margin-top: 33px; font-size: 18.900px; line-height: 24px; }
.place-card ul { margin-top: 27px; font-size: 18.700px; line-height: 24px; font-weight: 600; color: #dc143c; }

.scrollbar { width: 21px; flex: none; background: #f0f0f0; padding: 9px 0 8px 1px; display: flex; flex-direction: column; }
.scrollbar i { width: 0; height: 0; margin-left: 4px; border: 5px solid transparent; }
.scrollbar .up { border-top: 0; border-bottom-color: #a3a3a3; }
.scrollbar .down { border-bottom: 0; border-top-color: #505050; margin-top: auto; }
.thumb { width: 17px; margin-top: 7px; background: #c1c1c1; }
.short { height: 167px; }
.long { height: 585px; }
```
